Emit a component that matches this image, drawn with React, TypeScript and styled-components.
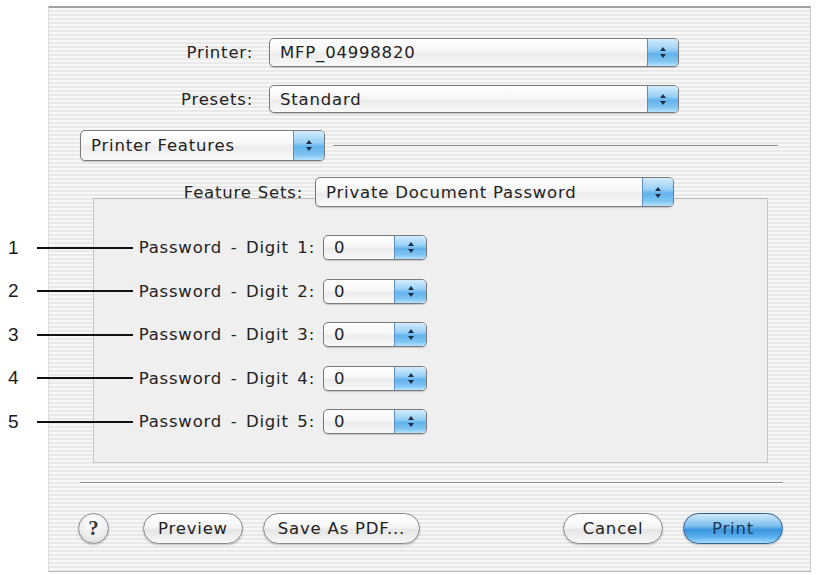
import React from "react";
import styled, { createGlobalStyle } from "styled-components";

const Global = createGlobalStyle`
  html, body { margin: 0; padding: 0; background: #ffffff; }
  body { width: 817px; height: 575px; overflow: hidden; font-family: "DejaVu Sans", "Open Sans", sans-serif; }
`;

const Page = styled.div`
  width: 817px;
  height: 575px;
  padding: 6px 6px 0 48px;
  box-sizing: border-box;
`;

const Window = styled.div`
  width: 763px;
  height: 566px;
  box-sizing: border-box;
  border-top: 2px solid #a2a2a2;
  border-left: 1px solid #dcdcdc;
  border-right: 1px solid #c4c4c4;
  border-bottom: 1px solid #b8b8b8;
  background: repeating-linear-gradient(to bottom, #f7f7f7 0px, #f7f7f7 2px, #e9e9e9 2px, #e9e9e9 4px);
  display: flex;
  flex-direction: column;
  padding-top: 30px;
`;

const LabeledRow = styled.div<{ $label: number; $gap: number; $mt: number }>`
  display: grid;
  grid-template-columns: ${(p) => p.$label}px auto;
  column-gap: ${(p) => p.$gap}px;
  align-items: center;
  margin-top: ${(p) => p.$mt}px;
`;

const OverlapRow = styled(LabeledRow)`
  position: relative;
  z-index: 1;
  margin-bottom: -9px;
`;

const Label = styled.span<{ $wide?: boolean }>`
  text-align: right;
  font-size: 16.5px;
  letter-spacing: 0.8px;
  word-spacing: ${(p) => (p.$wide ? 2.5 : 0)}px;
  color: #222222;
  white-space: nowrap;
`;

const PopupBox = styled.div<{ $w: number; $h: number }>`
  width: ${(p) => p.$w}px;
  height: ${(p) => p.$h}px;
  box-sizing: border-box;
  display: flex;
  align-items: stretch;
  border: 1px solid #7a7a7a;
  border-radius: 5px;
  overflow: hidden;
  background: linear-gradient(to bottom, #ffffff 0%, #f7f7f7 45%, #ececec 55%, #f9f9f9 100%);
  box-shadow: 0 1px 1px rgba(0, 0, 0, 0.18);
`;

const PopupText = styled.span`
  flex: 1;
  display: flex;
  align-items: center;
  padding-left: 10px;
  font-size: 16.5px;
  letter-spacing: 0.8px;
  color: #222222;
  white-space: nowrap;
`;

const Stepper = styled.span<{ $w: number }>`
  width: ${(p) => p.$w}px;
  display: flex;
  align-items: center;
  justify-content: center;
  border-left: 1px solid #5b8fbf;
  background: linear-gradient(to bottom, #d4ecfc 0%, #98d0f5 40%, #62b3ec 55%, #7cc3f2 80%, #b4e1fc 100%);
`;

const Arrows = () => (
  <svg width="8" height="13" viewBox="0 0 8 13">
    <path d="M4 1 L7 5 L1 5 Z" fill="#1d2f45" />
    <path d="M4 12 L7 8 L1 8 Z" fill="#1d2f45" />
  </svg>
);

const Popup = ({ w, h, text, stepW = 30 }: { w: number; h: number; text: string; stepW?: number }) => (
  <PopupBox $w={w} $h={h}>
    <PopupText>{text}</PopupText>
    <Stepper $w={stepW}>
      <Arrows />
    </Stepper>
  </PopupBox>
);

const PaneRow = styled.div`
  display: flex;
  align-items: center;
  margin: 17px 32px 0 31px;
  gap: 8px;
`;

const Rule = styled.div`
  flex: 1;
  height: 1px;
  background: #8a8a8a;
  border-bottom: 1px solid #fbfbfb;
`;

const InnerBox = styled.div`
  margin: 0 42px 0 44px;
  height: 265px;
  box-sizing: border-box;
  background: #efefef;
  border: 1px solid #c6c6c6;
  border-top-color: #b9b9b9;
  display: flex;
  flex-direction: column;
  padding-top: 36px;
  gap: 18.5px;
`;

const DigitRow = styled.div`
  position: relative;
  display: grid;
  grid-template-columns: 221px auto;
  column-gap: 8px;
  align-items: center;
`;

const Callout = styled.div`
  position: absolute;
  left: -86px;
  top: 50%;
  width: 125px;
  height: 22px;
  margin-top: -11px;
  display: flex;
  align-items: center;
`;

const CalloutNum = styled.span`
  width: 29px;
  font-family: "Liberation Sans", Arial, sans-serif;
  font-size: 19px;
  color: #1a1a1a;
`;

const CalloutLine = styled.span`
  flex: 1;
  height: 2px;
  background: #111;
`;

const Separator = styled.div`
  margin: 19px 27px 0 31px;
  height: 1px;
  background: #8f8f8f;
  border-bottom: 1px solid #fcfcfc;
`;

const ButtonBar = styled.div`
  display: flex;
  align-items: center;
  margin: 29px 27px 0 29px;
`;

const HelpButton = styled.div`
  width: 31px;
  height: 31px;
  box-sizing: border-box;
  border-radius: 50%;
  border: 1px solid #8a8a8a;
  background: radial-gradient(circle at 50% 30%, #ffffff 0%, #eeeeee 55%, #d4d4d4 100%);
  display: flex;
  align-items: center;
  justify-content: center;
  font-family: "Liberation Serif", serif;
  font-weight: bold;
  font-size: 21px;
  color: #3a3a3a;
  margin-right: 34px;
  box-shadow: 0 1px 2px rgba(0, 0, 0, 0.2);
`;

const Pill = styled.div<{ $w: number; $primary?: boolean; $ml?: number }>`
  width: ${(p) => p.$w}px;
  height: 31px;
  margin-left: ${(p) => p.$ml ?? 0}px;
  box-sizing: border-box;
  border-radius: 16px;
  border: 1px solid ${(p) => (p.$primary ? "#2f5f95" : "#888888")};
  background: ${(p) =>
    p.$primary
      ? "linear-gradient(to bottom, #cfe9fb 0%, #7fc0ef 40%, #3b96e0 55%, #5cb1ee 80%, #a6dcfb 100%)"
      : "linear-gradient(to bottom, #ffffff 0%, #f6f6f6 45%, #e6e6e6 55%, #f7f7f7 100%)"};
  display: flex;
  align-items: center;
  justify-content: center;
  font-size: 16.5px;
  letter-spacing: 0.8px;
  color: ${(p) => (p.$primary ? "#1b3655" : "#222222")};
  box-shadow: 0 1px 2px rgba(0, 0, 0, 0.22);
  white-space: nowrap;
`;

const Spacer = styled.div`
  flex: 1;
`;

const digits = [1, 2, 3, 4, 5];

export default function App() {
  return (
    <>
      <Global />
      <Page>
        <Window>
          <LabeledRow $label={204} $gap={16} $mt={0}>
            <Label>Printer:</Label>
            <Popup w={410} h={29} text="MFP_04998820" />
          </LabeledRow>
          <LabeledRow $label={204} $gap={16} $mt={18}>
            <Label>Presets:</Label>
            <Popup w={410} h={28} text="Standard" />
          </LabeledRow>
          <PaneRow>
            <Popup w={245} h={31} text="Printer Features" />
            <Rule />
          </PaneRow>
          <OverlapRow $label={254} $gap={12} $mt={16}>
            <Label>Feature Sets:</Label>
            <Popup w={359} h={30} text="Private Document Password" />
          </OverlapRow>
          <InnerBox>
            {digits.map((d) => (
              <DigitRow key={d}>
                <Callout>
                  <CalloutNum>{d}</CalloutNum>
                  <CalloutLine />
                </Callout>
                <Label $wide>Password - Digit {d}:</Label>
                <Popup w={104} h={25} text="0" stepW={31} />
              </DigitRow>
            ))}
          </InnerBox>
          <Separator />
          <ButtonBar>
            <HelpButton>?</HelpButton>
            <Pill $w={100}>Preview</Pill>
            <Pill $w={157} $ml={20}>Save As PDF...</Pill>
            <Spacer />
            <Pill $w={100}>Cancel</Pill>
            <Pill $w={100} $ml={20} $primary>Print</Pill>
          </ButtonBar>
        </Window>
      </Page>
    </>
  );
}
